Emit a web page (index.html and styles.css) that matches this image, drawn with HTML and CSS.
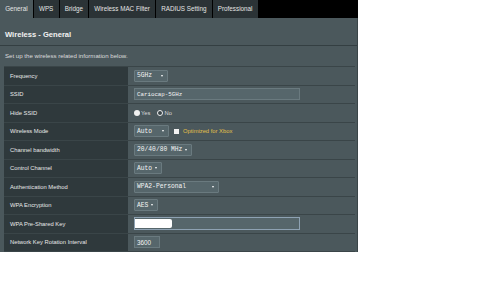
FILE: index.html
```html
<!DOCTYPE html>
<html lang="en">
<head>
    <meta charset="UTF-8">
    <title>Wireless - General</title>
    <link rel="stylesheet" href="styles.css">
</head>
<body>
    <div class="panel">
        <ul class="tabs">
            <li class="tab active">General</li>
            <li class="tab">WPS</li>
            <li class="tab">Bridge</li>
            <li class="tab">Wireless MAC Filter</li>
            <li class="tab">RADIUS Setting</li>
            <li class="tab">Professional</li>
        </ul>

        <div class="title">Wireless - General</div>
        <p class="desc">Set up the wireless related information below.</p>

        <div class="settings">
            <div class="row">
                <div class="label">Frequency</div>
                <div class="value"><span class="select w-freq">5GHz<i class="arrow"></i></span></div>
            </div>
            <div class="row">
                <div class="label">SSID</div>
                <div class="value"><span class="field wide">Cariocap-5GHz</span></div>
            </div>
            <div class="row">
                <div class="label">Hide SSID</div>
                <div class="value">
                    <span class="radio"></span><span class="opt">Yes</span>
                    <span class="radio checked"></span><span class="opt">No</span>
                </div>
            </div>
            <div class="row">
                <div class="label">Wireless Mode</div>
                <div class="value">
                    <span class="select w-mode">Auto<i class="arrow"></i></span>
                    <span class="check"></span><span class="xbox">Optimized for Xbox</span>
                </div>
            </div>
            <div class="row">
                <div class="label">Channel bandwidth</div>
                <div class="value"><span class="select w-bw">20/40/80 MHz<i class="arrow"></i></span></div>
            </div>
            <div class="row">
                <div class="label">Control Channel</div>
                <div class="value"><span class="select w-chan">Auto<i class="arrow"></i></span></div>
            </div>
            <div class="row">
                <div class="label">Authentication Method</div>
                <div class="value"><span class="select w-auth">WPA2-Personal<i class="arrow"></i></span></div>
            </div>
            <div class="row">
                <div class="label">WPA Encryption</div>
                <div class="value"><span class="select w-enc">AES<i class="arrow"></i></span></div>
            </div>
            <div class="row">
                <div class="label">WPA Pre-Shared Key</div>
                <div class="value"><span class="field wide focus"><span class="hidden-key"></span></span></div>
            </div>
            <div class="row">
                <div class="label">Network Key Rotation Interval</div>
                <div class="value"><span class="field short">3600</span></div>
            </div>
        </div>
    </div>
</body>
</html>
```

FILE: styles.css
```css
body {
    margin: 0;
    background: #fff;
    font-family: "Liberation Sans", Arial, sans-serif;
}

.panel {
    width: 358px;
    height: 252px;
    background: #4b585c;
    box-sizing: border-box;
    border-right: 1px solid #3a4548;
}

.tabs {
    display: flex;
    gap: 1px;
    margin: 0;
    padding: 0;
    list-style: none;
    height: 18px;
    background: #000;
    margin-right: -1px;
}

.tab {
    padding: 0 5.2px;
    line-height: 18px;
    font-size: 6.3px;
    color: #e4e4e4;
    background: #2b3336;
}

.tab.active {
    background: #4b585c;
}

.title {
    padding: 12px 5px 5px;
    line-height: 10px;
    font-size: 7.6px;
    font-weight: bold;
    color: #f2f2f2;
    border-bottom: 1px solid #343f42;
}

.desc {
    margin: 0;
    padding: 6px 5px;
    line-height: 8px;
    font-size: 6.1px;
    color: #dcdcdc;
}

.settings {
    margin: 0 2px 0 4px;
    border-top: 1px solid #3a4548;
}

.row {
    display: grid;
    grid-template-columns: 124px 1fr;
    height: 18.5px;
    box-sizing: border-box;
    border-bottom: 1px solid #3a4548;
}

.label {
    display: flex;
    align-items: center;
    padding-left: 6px;
    background: #2f393c;
    font-size: 5.8px;
    color: #e8e8e8;
}

.value {
    display: flex;
    align-items: center;
    padding-left: 6px;
    color: #e8e8e8;
}

.select {
    display: flex;
    align-items: center;
    height: 12px;
    box-sizing: border-box;
    padding: 0 4px 0 2px;
    background: #56666b;
    border: 1px solid #6a7a7f;
    border-radius: 1px;
    font-family: "Liberation Mono", monospace;
    font-size: 6.3px;
    color: #f4f4f4;
}

.arrow {
    margin-left: auto;
    border-left: 1.5px solid transparent;
    border-right: 1.5px solid transparent;
    border-top: 2.5px solid #fff;
}

.w-freq { width: 34px; }
.w-mode { width: 35px; }
.w-bw { width: 58px; }
.w-chan { width: 28px; }
.w-auth { width: 85px; }
.w-enc { width: 24px; }

.field {
    display: flex;
    align-items: center;
    height: 12px;
    box-sizing: border-box;
    padding: 0 2px;
    background: #56666b;
    border: 1px solid #6a7a7f;
    font-family: "Liberation Mono", monospace;
    font-size: 5.8px;
    color: #f4f4f4;
}

.field.wide { width: 166px; }

.field.short {
    width: 26px;
    font-family: "Liberation Sans", Arial, sans-serif;
    font-size: 6.3px;
}

.field.focus {
    height: 13px;
    padding: 0;
    border-color: #8ea2b3;
}

.hidden-key {
    width: 37px;
    height: 9px;
    background: #fff;
    border-radius: 0 2px 2px 0;
}

.radio {
    width: 6px;
    height: 6px;
    box-sizing: border-box;
    border-radius: 50%;
    background: #f0f0f0;
}

.radio.checked {
    border: 1.5px solid #f0f0f0;
    background: #3b4649;
}

.opt {
    margin: 0 7px 0 1px;
    font-size: 5.8px;
    color: #d8d8d8;
}

.check {
    width: 5px;
    height: 5px;
    margin: 0 4px 0 5px;
    background: #f2f2f2;
}

.xbox {
    font-size: 5.8px;
    color: #e3c04a;
}
```
